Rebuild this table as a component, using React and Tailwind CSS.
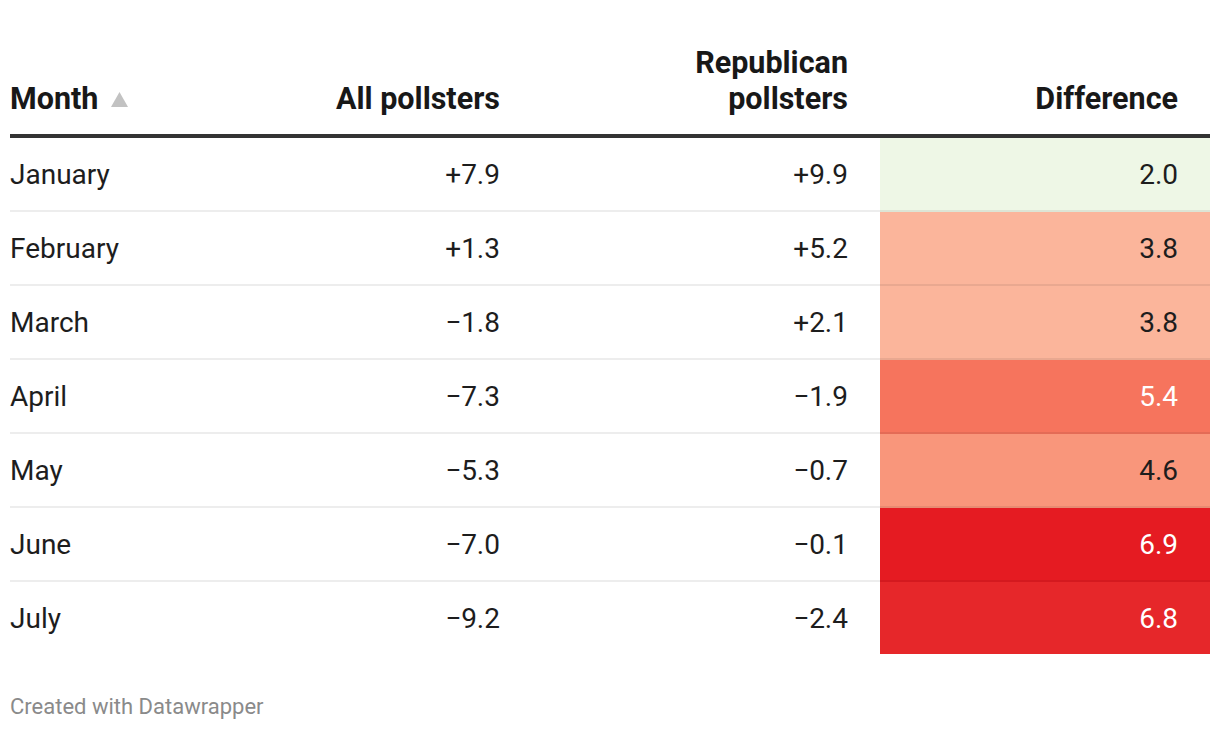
import React from "react";

const rows = [
  { month: "January", all: "+7.9", rep: "+9.9", diff: "2.0", bg: "bg-[#eef7e6]", light: false },
  { month: "February", all: "+1.3", rep: "+5.2", diff: "3.8", bg: "bg-[#fbb59b]", light: false },
  { month: "March", all: "\u22121.8", rep: "+2.1", diff: "3.8", bg: "bg-[#fbb59b]", light: false },
  { month: "April", all: "\u22127.3", rep: "\u22121.9", diff: "5.4", bg: "bg-[#f6745d]", light: true },
  { month: "May", all: "\u22125.3", rep: "\u22120.7", diff: "4.6", bg: "bg-[#f9967b]", light: false },
  { month: "June", all: "\u22127.0", rep: "\u22120.1", diff: "6.9", bg: "bg-[#e51b22]", light: true },
  { month: "July", all: "\u22129.2", rep: "\u22122.4", diff: "6.8", bg: "bg-[#e6272a]", light: true },
];

const cols = "grid grid-cols-[190px_332px_348px_330px]";

const App = () => {
  return (
    <div className="bg-white w-[1220px] h-[730px] pl-[10px] pt-[45px] font-['Roboto',sans-serif] text-[#1d1d1d]">
      <div className="w-[1200px]">
        {/* header */}
        <div className={`${cols} items-end text-[30.5px] leading-[36px] font-bold text-[#181818] border-b-4 border-[#333]`}>
          <div className="pb-[17px] flex items-center gap-[13px]">
            <span>Month</span>
            <svg width="17" height="15" viewBox="0 0 17 15" className="mt-[1px]">
              <polygon points="8.5,0 17,15 0,15" fill="#c2c2c2" />
            </svg>
          </div>
          <div className="pb-[17px] pr-[32px] text-right">All pollsters</div>
          <div className="pb-[17px] pr-[32px] text-right">
            Republican
            <br />
            pollsters
          </div>
          <div className="pb-[17px] pr-[32px] text-right">Difference</div>
        </div>

        {/* body */}
        {rows.map((r, i) => {
          const last = i === rows.length - 1;
          const b = last ? "h-[72px]" : "h-[74px] border-b-2 border-black/[0.07]";
          return (
            <div key={r.month} className={`${cols} text-[28px] leading-[33px]`}>
              <div className={`pt-[20px] ${b}`}>{r.month}</div>
              <div className={`pt-[20px] pr-[32px] text-right ${b}`}>{r.all}</div>
              <div className={`pt-[20px] pr-[32px] text-right ${b}`}>{r.rep}</div>
              <div className={`pt-[20px] pr-[32px] text-right ${r.bg} ${b} ${r.light ? "text-white" : ""}`}>
                {r.diff}
              </div>
            </div>
          );
        })}

        <div className="mt-[40px] text-[22px] leading-[26px] text-[#8a8a8a]">Created with Datawrapper</div>
      </div>
    </div>
  );
};

export default App;
